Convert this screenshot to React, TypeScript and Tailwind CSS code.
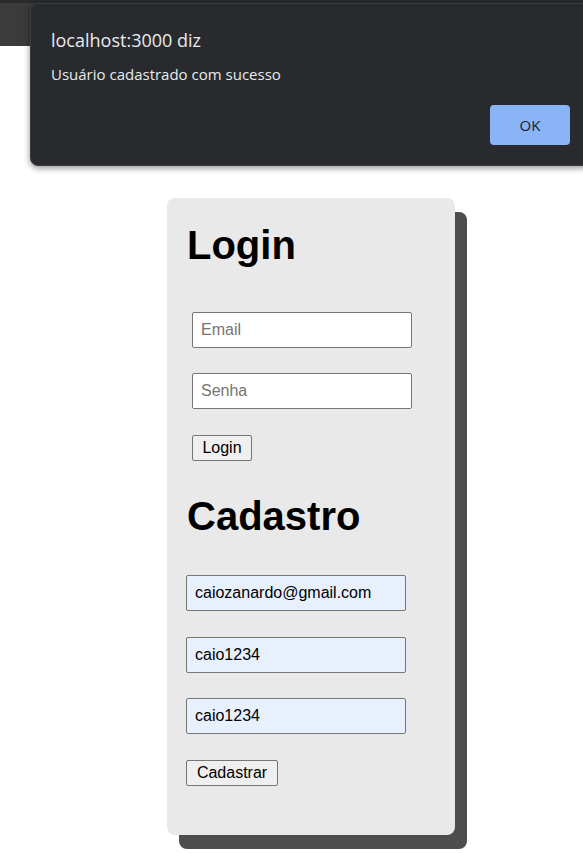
export default function App() {
  return (
    <div className="relative min-h-[853px] overflow-hidden bg-white font-['Liberation_Sans',Arial,sans-serif] text-black">
      {/* Browser strip behind the alert */}
      <div className="h-[46px] border-t-[3px] border-[#292a2d] bg-[#3b3b3b]" />

      {/* Card */}
      <div className="pl-[167px] pt-[152px]">
        <div className="w-[288px] rounded-lg bg-[#e9e9e9] px-5 pb-[49px] pt-6 shadow-[12px_14px_0_#4d4d4d]">
          <h1 className="text-[40px] font-bold leading-[46px]">Login</h1>
          <div className="ml-[5px] mt-[44px] flex flex-col items-start">
            <input
              placeholder="Email"
              className="h-[36px] w-[220px] rounded-[2px] border border-[#767676] bg-white px-2 text-base placeholder:text-[#757575]"
            />
            <input
              placeholder="Senha"
              className="mt-[25px] h-[36px] w-[220px] rounded-[2px] border border-[#767676] bg-white px-2 text-base placeholder:text-[#757575]"
            />
            <button className="mt-[26px] h-[26px] w-[60px] rounded-[2px] border border-[#767676] bg-[#efefef] text-base">
              Login
            </button>
          </div>

          <h1 className="mt-[32px] text-[40px] font-bold leading-[46px]">Cadastro</h1>
          <div className="-ml-px mt-[36px] flex flex-col items-start">
            <input
              defaultValue="caiozanardo@gmail.com"
              className="h-[36px] w-[220px] rounded-[2px] border border-[#767676] bg-[#e8f0fe] px-2 text-base"
            />
            <input
              defaultValue="caio1234"
              className="mt-[26px] h-[36px] w-[220px] rounded-[2px] border border-[#767676] bg-[#e8f0fe] px-2 text-base"
            />
            <input
              defaultValue="caio1234"
              className="mt-[25px] h-[36px] w-[220px] rounded-[2px] border border-[#767676] bg-[#e8f0fe] px-2 text-base"
            />
            <button className="mt-[26px] h-[26px] w-[92px] rounded-[2px] border border-[#767676] bg-[#efefef] text-base">
              Cadastrar
            </button>
          </div>
        </div>
      </div>

      {/* Alert dialog */}
      <div className="absolute left-[30px] top-[3px] flex h-[163px] w-[561px] flex-col rounded-lg border border-[#3c3d40] bg-[#292a2d] pb-5 pl-[20px] pr-5 pt-6 font-['Open_Sans','Noto_Sans',sans-serif] shadow-[0_2px_6px_rgba(0,0,0,0.45)]">
        <p className="text-[18px] leading-6 text-[#e8eaed]">localhost:3000 diz</p>
        <p className="mt-[12px] text-[15px] leading-5 text-[#e8eaed]">Usuário cadastrado com sucesso</p>
        <div className="mt-auto flex justify-end">
          <button className="h-10 w-20 rounded-[4px] bg-[#8ab4f8] text-[15px] text-[#202124]">OK</button>
        </div>
      </div>
    </div>
  )
}
